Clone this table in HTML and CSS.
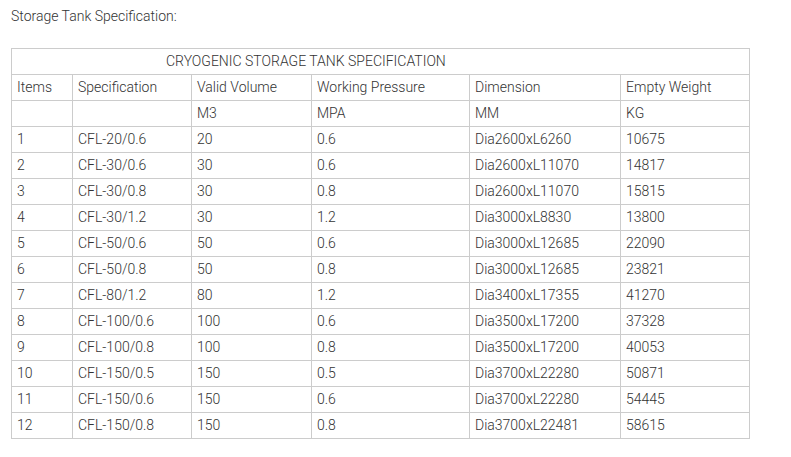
FILE: index.html
```html
<!DOCTYPE html>
<html>
<head>
<meta charset="utf-8">
<link rel="stylesheet" href="styles.css">
</head>
<body>
<div class="page">
  <p class="title">Storage Tank Specification:</p>
  <table class="spec">
    <colgroup>
      <col class="c1"><col class="c2"><col class="c3"><col class="c4"><col class="c5"><col class="c6">
    </colgroup>
    <tr><td colspan="6" class="caption">CRYOGENIC STORAGE TANK SPECIFICATION</td></tr>
    <tr><td>Items</td><td>Specification</td><td>Valid Volume</td><td>Working Pressure</td><td>Dimension</td><td>Empty Weight</td></tr>
    <tr><td></td><td></td><td>M3</td><td>MPA</td><td>MM</td><td>KG</td></tr>
    <tr><td>1</td><td>CFL-20/0.6</td><td>20</td><td>0.6</td><td>Dia2600xL6260</td><td>10675</td></tr>
    <tr><td>2</td><td>CFL-30/0.6</td><td>30</td><td>0.6</td><td>Dia2600xL11070</td><td>14817</td></tr>
    <tr><td>3</td><td>CFL-30/0.8</td><td>30</td><td>0.8</td><td>Dia2600xL11070</td><td>15815</td></tr>
    <tr><td>4</td><td>CFL-30/1.2</td><td>30</td><td>1.2</td><td>Dia3000xL8830</td><td>13800</td></tr>
    <tr><td>5</td><td>CFL-50/0.6</td><td>50</td><td>0.6</td><td>Dia3000xL12685</td><td>22090</td></tr>
    <tr><td>6</td><td>CFL-50/0.8</td><td>50</td><td>0.8</td><td>Dia3000xL12685</td><td>23821</td></tr>
    <tr><td>7</td><td>CFL-80/1.2</td><td>80</td><td>1.2</td><td>Dia3400xL17355</td><td>41270</td></tr>
    <tr><td>8</td><td>CFL-100/0.6</td><td>100</td><td>0.6</td><td>Dia3500xL17200</td><td>37328</td></tr>
    <tr><td>9</td><td>CFL-100/0.8</td><td>100</td><td>0.8</td><td>Dia3500xL17200</td><td>40053</td></tr>
    <tr><td>10</td><td>CFL-150/0.5</td><td>150</td><td>0.5</td><td>Dia3700xL22280</td><td>50871</td></tr>
    <tr><td>11</td><td>CFL-150/0.6</td><td>150</td><td>0.6</td><td>Dia3700xL22280</td><td>54445</td></tr>
    <tr><td>12</td><td>CFL-150/0.8</td><td>150</td><td>0.8</td><td>Dia3700xL22481</td><td>58615</td></tr>
  </table>
</div>
</body>
</html>
```
FILE: styles.css
```css
html, body {
  margin: 0;
  padding: 0;
  background: #fff;
}
.page {
  padding: 6px 0 0 11px;
  font-family: Roboto, "Liberation Sans", sans-serif;
  font-weight: 300;
  color: #333;
}
.title {
  margin: 0;
  font-size: 14px;
  line-height: 20px;
  height: 42px;
}
.spec {
  border-collapse: collapse;
  table-layout: fixed;
  width: 739px;
  font-size: 14px;
}
.c1 { width: 61px; }
.c2 { width: 119px; }
.c3 { width: 120px; }
.c4 { width: 158px; }
.c5 { width: 151px; }
.c6 { width: 129px; }
.spec td {
  border: 1px solid #ccc;
  height: 25px;
  padding: 0 0 0 5px;
  line-height: 25px;
  vertical-align: middle;
  white-space: nowrap;
}
.spec td.caption {
  padding-left: 0;
  text-align: left;
  text-indent: 154px;
}
```
